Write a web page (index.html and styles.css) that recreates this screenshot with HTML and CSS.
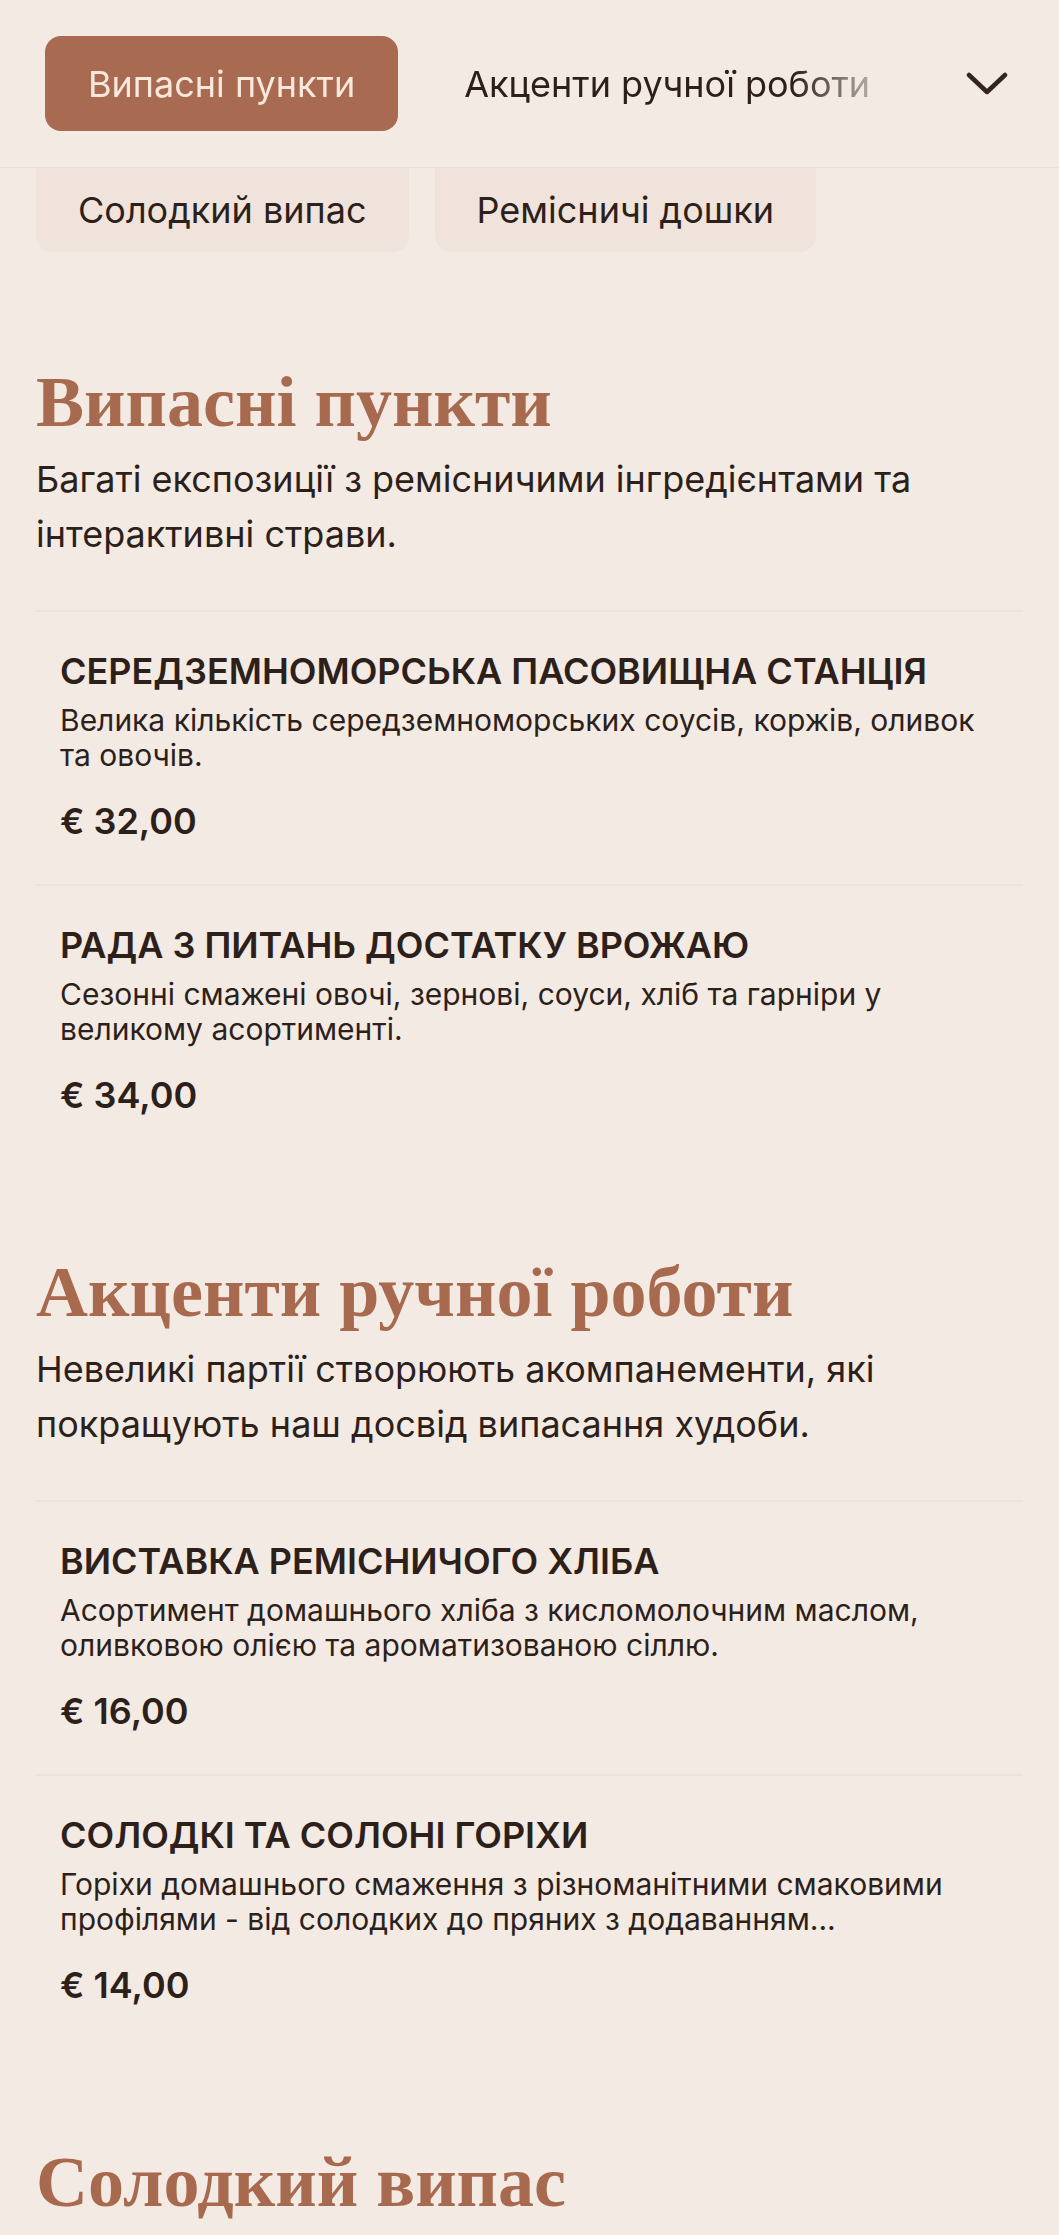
FILE: index.html
```html
<!DOCTYPE html>
<html lang="uk">

<head>
  <meta charset="UTF-8" />
  <title>Меню випасу</title>
  <link rel="stylesheet" href="styles.css">
</head>

<body>
  <!-- верхня навігація по категоріях -->
  <header class="topbar">
    <nav class="tabs">
      <a class="tab active" href="#grazing">Випасні пункти</a>
      <a class="tab" href="#handmade">Акценти ручної роботи</a>
    </nav>
    <button class="toggle" type="button" aria-label="Усі категорії">
      <svg width="42" height="24" viewBox="0 0 42 24">
        <polyline points="3,3 21,20 39,3" fill="none" stroke="#33241f" stroke-width="4.5" stroke-linecap="round" stroke-linejoin="round" />
      </svg>
    </button>
  </header>

  <div class="chips">
    <a class="chip" href="#sweet">Солодкий випас</a>
    <a class="chip" href="#boards">Ремісничі дошки</a>
  </div>

  <section class="section" id="grazing">
    <h2 class="section-title">Випасні пункти</h2>
    <p class="section-desc">Багаті експозиції з ремісничими інгредієнтами та інтерактивні страви.</p>
    <ul class="items">
      <li class="item">
        <h3 class="item-name">Середземноморська пасовищна станція</h3>
        <p class="item-desc">Велика кількість середземноморських соусів, коржів, оливок та овочів.</p>
        <div class="item-price">€ 32,00</div>
      </li>
      <li class="item">
        <h3 class="item-name">Рада з питань достатку врожаю</h3>
        <p class="item-desc">Сезонні смажені овочі, зернові, соуси, хліб та гарніри у великому асортименті.</p>
        <div class="item-price">€ 34,00</div>
      </li>
    </ul>
  </section>

  <section class="section" id="handmade">
    <h2 class="section-title">Акценти ручної роботи</h2>
    <p class="section-desc">Невеликі партії створюють акомпанементи, які покращують наш досвід випасання худоби.</p>
    <ul class="items">
      <li class="item">
        <h3 class="item-name">Виставка ремісничого хліба</h3>
        <p class="item-desc">Асортимент домашнього хліба з кисломолочним маслом, оливковою олією та ароматизованою сіллю.</p>
        <div class="item-price">€ 16,00</div>
      </li>
      <li class="item">
        <h3 class="item-name">Солодкі та солоні горіхи</h3>
        <p class="item-desc">Горіхи домашнього смаження з різноманітними смаковими профілями - від солодких до пряних з додаванням...</p>
        <div class="item-price">€ 14,00</div>
      </li>
    </ul>
  </section>

  <section class="section" id="sweet">
    <h2 class="section-title">Солодкий випас</h2>
  </section>
</body>

</html>
```

FILE: styles.css
```css
* {
  padding: 0;
  margin: 0;
  box-sizing: border-box;
  list-style: none;
}

body {
  background: #f4eae4;
  color: #2d1f1a;
  font-family: Inter, "Noto Sans", sans-serif;
}

a {
  color: inherit;
  text-decoration: none;
}

.topbar {
  display: flex;
  align-items: center;
  height: 168px;
  padding: 36px 0 36px 45px;
  border-bottom: 1px solid #ebdfd7;
  background: #f4eae4;
}

.tabs {
  flex: 1;
  display: flex;
  gap: 23px;
  overflow: hidden;
  white-space: nowrap;
  -webkit-mask-image: linear-gradient(to right, #000 86%, transparent 99%);
  mask-image: linear-gradient(to right, #000 86%, transparent 99%);
}

.tab {
  flex-shrink: 0;
  display: flex;
  align-items: center;
  height: 95px;
  padding: 0 43px;
  border-radius: 16px;
  font-size: 36px;
}

.tab.active {
  background: #a86a50;
  color: #fbe8dd;
}

.toggle {
  width: 144px;
  height: 95px;
  display: flex;
  align-items: center;
  justify-content: center;
  background: none;
  border: 0;
  cursor: pointer;
}

.chips {
  display: flex;
  gap: 26px;
  padding: 0 36px;
  margin-bottom: 16px;
}

.chip {
  display: flex;
  align-items: center;
  height: 84px;
  padding: 0 42px;
  background: #f0e3db;
  border-radius: 0 0 16px 16px;
  font-size: 36px;
}

.section {
  padding: 95px 36px 0;
}

.section-title {
  font-family: "Liberation Serif", serif;
  font-size: 72px;
  font-weight: bold;
  line-height: 79px;
  color: #a86a4f;
}

.section-desc {
  margin-top: 10px;
  font-size: 36px;
  line-height: 55px;
}

.items {
  margin-top: 48px;
}

.item {
  padding: 39px 24px 43px;
  border-top: 2px solid #ede1d9;
}

.item-name {
  font-size: 36px;
  font-weight: 600;
  line-height: 40px;
  text-transform: uppercase;
}

.item-desc {
  margin-top: 12px;
  font-size: 30px;
  line-height: 35px;
}

.item-price {
  margin-top: 28px;
  font-size: 36px;
  font-weight: 600;
  line-height: 40px;
}
```
